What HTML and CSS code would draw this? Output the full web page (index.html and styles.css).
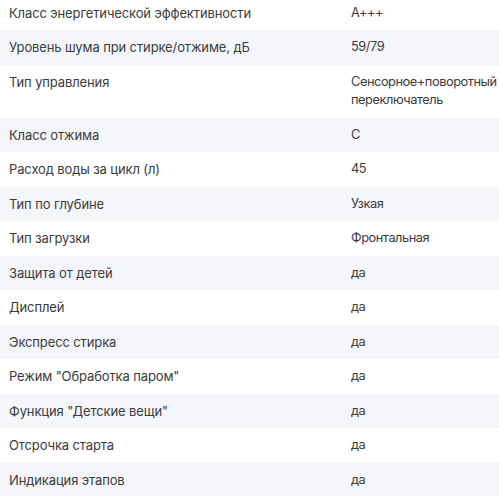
FILE: index.html
```html
<!DOCTYPE html>
<html lang="ru">
<head>
<meta charset="utf-8">
<link rel="stylesheet" href="styles.css">
</head>
<body>
<div class="specs">
  <div class="row"><div class="name">Класс энергетической эффективности</div><div class="val">A+++</div></div>
  <div class="row"><div class="name">Уровень шума при стирке/отжиме, дБ</div><div class="val">59/79</div></div>
  <div class="row"><div class="name">Тип управления</div><div class="val">Сенсорное+поворотный переключатель</div></div>
  <div class="row"><div class="name">Класс отжима</div><div class="val">C</div></div>
  <div class="row"><div class="name">Расход воды за цикл (л)</div><div class="val">45</div></div>
  <div class="row"><div class="name">Тип по глубине</div><div class="val">Узкая</div></div>
  <div class="row"><div class="name">Тип загрузки</div><div class="val">Фронтальная</div></div>
  <div class="row"><div class="name">Защита от детей</div><div class="val">да</div></div>
  <div class="row"><div class="name">Дисплей</div><div class="val">да</div></div>
  <div class="row"><div class="name">Экспресс стирка</div><div class="val">да</div></div>
  <div class="row"><div class="name">Режим "Обработка паром"</div><div class="val">да</div></div>
  <div class="row"><div class="name">Функция "Детские вещи"</div><div class="val">да</div></div>
  <div class="row"><div class="name">Отсрочка старта</div><div class="val">да</div></div>
  <div class="row"><div class="name">Индикация этапов</div><div class="val">да</div></div>
</div>
</body>
</html>
```
FILE: styles.css
```css
html, body {
  margin: 0;
  padding: 0;
  background: #ffffff;
}
body {
  font-family: Inter, "Noto Sans", sans-serif;
  font-size: 13px;
  line-height: 18.5px;
  letter-spacing: -0.12px;
  color: #3b3b3b;
  overflow: hidden;
}
.specs {
  margin-top: -4.5px;
}
.row {
  display: grid;
  grid-template-columns: 342px minmax(0, 1fr);
}
.row:nth-child(even) {
  background: #f5f6fa;
}
.name {
  padding: 8px 4px 8px 9px;
}
.val {
  padding: 8px 0 8px 9px;
  font-size: 12.8px;
  letter-spacing: -0.45px;
}
```
